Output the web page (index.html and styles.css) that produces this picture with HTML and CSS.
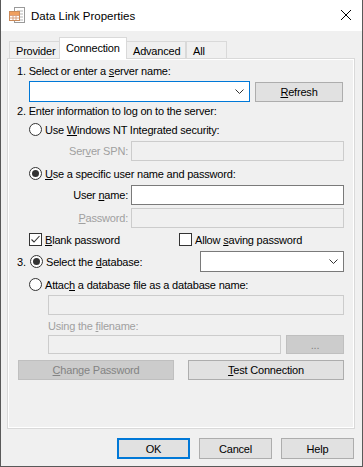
FILE: index.html
```html
<!DOCTYPE html>
<html lang="en">
<head>
    <meta charset="UTF-8">
    <title>Data Link Properties</title>
    <link rel="stylesheet" href="styles.css">
</head>
<body>
    <div class="window">
        <div class="titlebar">
            <svg class="app-icon" width="16" height="16" viewBox="0 0 16 16">
                <rect x="5.5" y="0.5" width="10" height="15" fill="#fff" stroke="#9a9a9a"/>
                <path d="M8 4h6M8 7h6M11 10h3M11 13h3" stroke="#b5b5b5"/>
                <rect x="0.5" y="4.5" width="10" height="9" fill="#fff" stroke="#c98a5a"/>
                <rect x="1" y="5" width="9" height="3" fill="#f0a060"/>
                <path d="M1 8.5h9M1 11h9M4 8v5M7 8v5" stroke="#d8a080"/>
            </svg>
            <span class="title">Data Link Properties</span>
            <svg class="close" width="12" height="12" viewBox="0 0 12 12">
                <path d="M1 1L11 11M11 1L1 11" stroke="#000" stroke-width="1"/>
            </svg>
        </div>

        <div class="tabs">
            <div class="tab tab-provider">Provider</div>
            <div class="tab tab-active">Connection</div>
            <div class="tab tab-advanced">Advanced</div>
            <div class="tab tab-all">All</div>
        </div>

        <div class="panel">
            <div class="label row-1">1. Select or enter a <u>s</u>erver name:</div>
            <div class="row server-row">
                <div class="combo focused">
                    <svg class="chevron" width="9" height="5" viewBox="0 0 9 5"><path d="M0.5 0.5L4.5 4.5L8.5 0.5" fill="none" stroke="#333"/></svg>
                </div>
                <button class="btn refresh"><u>R</u>efresh</button>
            </div>

            <div class="label row-2">2. Enter information to log on to the server:</div>
            <div class="row option indent radio-nt">
                <span class="radio"></span>
                <span>Use <u>W</u>indows NT Integrated security:</span>
            </div>
            <div class="row field spn-row">
                <span class="field-label disabled">Ser<u>v</u>er SPN:</span>
                <div class="input disabled-input"></div>
            </div>
            <div class="row option indent radio-user">
                <span class="radio checked"></span>
                <span><u>U</u>se a specific user name and password:</span>
            </div>
            <div class="row field user-row">
                <span class="field-label">User <u>n</u>ame:</span>
                <div class="input"></div>
            </div>
            <div class="row field pass-row">
                <span class="field-label disabled"><u>P</u>assword:</span>
                <div class="input disabled-input"></div>
            </div>
            <div class="row checks">
                <div class="option blank">
                    <span class="checkbox checked">
                        <svg width="11" height="11" viewBox="0 0 11 11"><path d="M1.5 5.5L4 8L9.5 2" fill="none" stroke="#333" stroke-width="1.1"/></svg>
                    </span>
                    <span><u>B</u>lank password</span>
                </div>
                <div class="option">
                    <span class="checkbox"></span>
                    <span>Allow <u>s</u>aving password</span>
                </div>
            </div>

            <div class="row db-row">
                <span class="num">3.</span>
                <span class="radio checked"></span>
                <span class="db-label">Select the <u>d</u>atabase:</span>
                <div class="combo db-combo">
                    <svg class="chevron" width="9" height="5" viewBox="0 0 9 5"><path d="M0.5 0.5L4.5 4.5L8.5 0.5" fill="none" stroke="#333"/></svg>
                </div>
            </div>
            <div class="row option indent radio-attach">
                <span class="radio"></span>
                <span>Attac<u>h</u> a database file as a database name:</span>
            </div>
            <div class="input disabled-input attach-input"></div>
            <div class="label disabled filename-label">Using the <u>f</u>ilename:</div>
            <div class="row file-row">
                <div class="input disabled-input file-input"></div>
                <button class="btn btn-disabled browse">...</button>
            </div>
            <div class="row action-row">
                <button class="btn btn-disabled change-pass"><u>C</u>hange Password</button>
                <button class="btn test-conn"><u>T</u>est Connection</button>
            </div>
        </div>

        <div class="footer">
            <button class="btn dlg-btn default">OK</button>
            <button class="btn dlg-btn">Cancel</button>
            <button class="btn dlg-btn">Help</button>
        </div>
    </div>
</body>
</html>
```

FILE: styles.css
```css
body {
    margin: 0;
    font-family: "Liberation Sans", Arial, sans-serif;
    font-size: 11px;
    letter-spacing: -0.2px;
    color: #000;
    background: #f0f0f0;
}

u {
    text-decoration: underline;
    text-underline-offset: 1px;
}

.window {
    width: 363px;
    height: 467px;
    box-sizing: border-box;
    border: 1px solid #595959;
    border-top: none;
    background: #f0f0f0;
}

.titlebar {
    height: 31px;
    background: white;
    display: flex;
    align-items: center;
    padding-left: 8px;
    padding-right: 10px;
}

.app-icon {
    margin-top: -2px;
}

.title {
    margin-left: 6px;
    font-size: 11.5px;
    letter-spacing: 0;
    flex: 1;
}

.close {
    margin-top: -1px;
}

/* tabs */
.tabs {
    display: flex;
    align-items: flex-end;
    height: 27px;
    padding-left: 8px;
    position: relative;
    z-index: 1;
}

.tab {
    height: 17px;
    box-sizing: border-box;
    border: 1px solid #d9d9d9;
    border-bottom: none;
    background: #f0f0f0;
    padding-left: 6px;
    padding-top: 2px;
    line-height: 14px;
}

.tab-provider { width: 50px; border-right: none; }
.tab-advanced { width: 59px; border-left: none; }
.tab-all { width: 41px; border-left: 1px solid #d9d9d9; }

.tab-active {
    width: 68px;
    height: 22px;
    background: white;
    margin-bottom: -1px;
    padding-top: 3px;
    padding-left: 6px;
}

.panel {
    margin-left: 6px;
    width: 348px;
    height: 371px;
    box-sizing: border-box;
    border: 1px solid #d9d9d9;
    box-shadow: inset 0 0 0 1px #fff;
    padding: 0 10px 0 9px;
}

.label {
    height: 14px;
    line-height: 14px;
}

.row {
    display: flex;
    align-items: center;
}

.indent {
    margin-left: 12px;
}

.disabled {
    color: #a0a0a0;
}

.row-1 { margin-top: 5px; }

.server-row {
    margin-top: 3px;
    margin-left: 12px;
    gap: 5px;
}

.combo {
    height: 21px;
    box-sizing: border-box;
    border: 1px solid #7a7a7a;
    background: white;
    display: flex;
    align-items: center;
    justify-content: flex-end;
    padding-right: 5px;
}

.combo.focused {
    width: 221px;
    border-color: #0078d7;
}

.btn {
    font-family: inherit;
    font-size: 11px;
    letter-spacing: inherit;
    color: #000;
    background: #e1e1e1;
    border: 1px solid #adadad;
    box-sizing: border-box;
    padding: 0;
}

.refresh {
    width: 88px;
    height: 20px;
}

.row-2 { margin-top: 2px; }

.option {
    display: flex;
    align-items: center;
    gap: 3px;
    height: 15px;
}

.radio {
    width: 13px;
    height: 13px;
    box-sizing: border-box;
    border: 1px solid #333;
    border-radius: 50%;
    background: white;
    display: inline-flex;
    align-items: center;
    justify-content: center;
}

.radio.checked::after {
    content: "";
    width: 7px;
    height: 7px;
    border-radius: 50%;
    background: #333;
}

.checkbox {
    width: 13px;
    height: 13px;
    box-sizing: border-box;
    border: 1px solid #333;
    background: white;
    display: inline-flex;
    align-items: center;
    justify-content: center;
}

.radio-nt { margin-top: 4px; }

.field {
    height: 20px;
}

.field-label {
    width: 111px;
    text-align: right;
    margin-right: 3px;
}

.input {
    flex: 1;
    height: 20px;
    box-sizing: border-box;
    border: 1px solid #7a7a7a;
    background: white;
}

.disabled-input {
    border-color: #cccccc;
    background: #f0f0f0;
}

.spn-row { margin-top: 4px; }
.radio-user { margin-top: 5px; }
.user-row { margin-top: 4px; }
.pass-row { margin-top: 3px; }

.checks {
    margin-top: 4px;
    margin-left: 12px;
}

.blank {
    width: 150px;
}

.db-row {
    margin-top: 4px;
    height: 21px;
}

.num {
    width: 13px;
}

.db-label {
    margin-left: 3px;
    width: 154px;
}

.db-combo {
    flex: 1;
}

.radio-attach { margin-top: 5px; }

.attach-input {
    margin-top: 3px;
    margin-left: 31px;
    height: 20px;
}

.filename-label {
    margin-top: 4px;
    margin-left: 31px;
}

.file-row {
    margin-top: 2px;
    margin-left: 31px;
    gap: 5px;
}

.file-input {
    height: 19px;
}

.btn-disabled {
    background: #cccccc;
    border-color: #bfbfbf;
    color: #838383;
}

.browse {
    width: 58px;
    height: 19px;
    line-height: 14px;
}

.action-row {
    margin-top: 6px;
    margin-left: 1px;
    gap: 14px;
}

.change-pass {
    width: 156px;
    height: 20px;
}

.test-conn {
    flex: 1;
    height: 20px;
}

.footer {
    display: flex;
    justify-content: flex-end;
    gap: 9px;
    margin-top: 9px;
    padding-right: 8px;
}

.dlg-btn {
    width: 73px;
    height: 21px;
}

.dlg-btn.default {
    border: 2px solid #0078d7;
}
```
